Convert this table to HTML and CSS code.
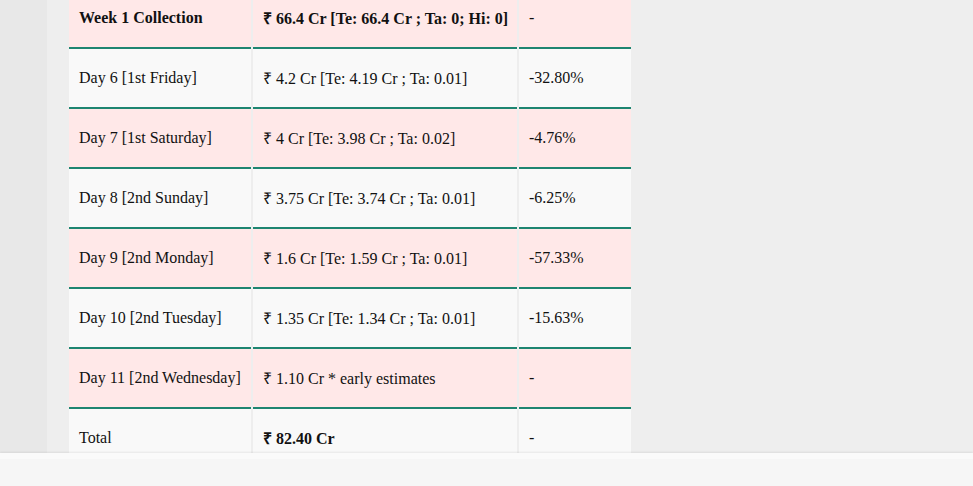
FILE: index.html
```html
<!DOCTYPE html>
<html>
<head>
<meta charset="utf-8">
<link rel="stylesheet" href="styles.css">
</head>
<body>
<div class="layout">
  <aside class="side"></aside>
  <main class="main">
    <table class="box">
      <tbody>
        <tr class="pink"><td><b>Week 1 Collection</b></td><td><b>₹ 66.4 Cr [Te: 66.4 Cr ; Ta: 0; Hi: 0]</b></td><td>-</td></tr>
        <tr class="light"><td>Day 6 [1st Friday]</td><td>₹ 4.2 Cr [Te: 4.19 Cr ; Ta: 0.01]</td><td>-32.80%</td></tr>
        <tr class="pink"><td>Day 7 [1st Saturday]</td><td>₹ 4 Cr [Te: 3.98 Cr ; Ta: 0.02]</td><td>-4.76%</td></tr>
        <tr class="light"><td>Day 8 [2nd Sunday]</td><td>₹ 3.75 Cr [Te: 3.74 Cr ; Ta: 0.01]</td><td>-6.25%</td></tr>
        <tr class="pink"><td>Day 9 [2nd Monday]</td><td>₹ 1.6 Cr [Te: 1.59 Cr ; Ta: 0.01]</td><td>-57.33%</td></tr>
        <tr class="light"><td>Day 10 [2nd Tuesday]</td><td>₹ 1.35 Cr [Te: 1.34 Cr ; Ta: 0.01]</td><td>-15.63%</td></tr>
        <tr class="pink"><td>Day 11 [2nd Wednesday]</td><td>₹ 1.10 Cr * early estimates</td><td>-</td></tr>
        <tr class="light"><td>Total</td><td><b>₹ 82.40 Cr</b></td><td>-</td></tr>
      </tbody>
    </table>
  </main>
</div>
<div class="bottombar"></div>
</body>
</html>
```

FILE: styles.css
```css
html, body {
  margin: 0;
  padding: 0;
  height: 100%;
  overflow: hidden;
}
body {
  background: #eeeeee;
  font-family: "Liberation Serif", "Times New Roman", serif;
  font-size: 16px;
  color: #111;
}
.layout {
  display: flex;
  height: 100%;
}
.side {
  width: 47px;
  flex: 0 0 47px;
  background: #e8e8e8;
}
.main {
  flex: 1;
  padding-left: 20px;
  margin-top: -11px;
}
.box {
  border-collapse: separate;
  border-spacing: 2px 0;
  table-layout: fixed;
  width: 566px;
}
.box td {
  height: 60px;
  padding: 0 10px;
  border-bottom: 2px solid #1e8571;
  vertical-align: middle;
  white-space: nowrap;
  box-sizing: border-box;
}
.box td:nth-child(1) { width: 182px; }
.box td:nth-child(2) { width: 264px; }
.box td:nth-child(3) { width: 112px; }
.pink td { background: #ffe8e8; }
.light td { background: #f9f9f9; }
.bottombar {
  position: fixed;
  left: 0;
  right: 0;
  bottom: 0;
  height: 27px;
  background: #f6f6f6;
  border-top: 6px solid #fafafa;
  box-shadow: 0 -1px 2px rgba(0,0,0,0.08);
}
```
